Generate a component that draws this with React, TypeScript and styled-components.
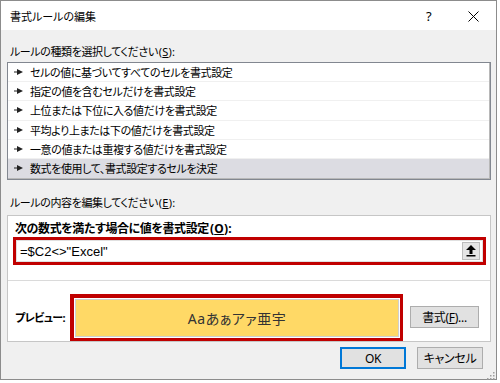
import React from "react";
import styled, { createGlobalStyle } from "styled-components";

const GlobalStyle = createGlobalStyle`
  html, body {
    margin: 0;
    padding: 0;
    background: #ffffff;
  }
  * {
    box-sizing: border-box;
  }
`;

const uiFont = `"Noto Sans", "Noto Sans CJK JP", sans-serif`;

// Window: the whole dialog frame
const Window = styled.div`
  width: 497px;
  height: 380px;
  border: 1px solid #8c8c8c;
  background: #f0f0f0;
  display: flex;
  flex-direction: column;
  font-family: ${uiFont};
  font-size: 11px;
  letter-spacing: -0.4px;
  font-feature-settings: "palt";
  color: #000;
  position: relative;
`;

const TitleBar = styled.div`
  height: 29px;
  background: #ffffff;
  display: flex;
  align-items: center;
  padding: 1px 0 0 9px;
`;

const TitleText = styled.div`
  flex: 1;
  letter-spacing: 0;
`;

const TitleButton = styled.div`
  width: 45px;
  height: 29px;
  display: flex;
  align-items: center;
  justify-content: center;
  font-size: 13px;
`;

const Body = styled.div`
  flex: 1;
  display: flex;
  flex-direction: column;
  padding: 0 6px 0 6px;
`;

const SectionLabel = styled.div<{ $top: number }>`
  margin-top: ${(p) => p.$top}px;
  padding-left: 3px;
  height: 16px;
  line-height: 16px;
`;

// Accel: the "(S):" tail of a label, in plain Latin spacing
const Accel = styled.span`
  letter-spacing: 0.2px;
  padding-left: 1px;
`;

const ListBox = styled.div`
  margin-top: 2px;
  width: 484px;
  height: 118px;
  border: 1px solid #828790;
  box-shadow: inset -1px -1px 0 #b8b8b8;
  background: #ffffff;
  display: flex;
  flex-direction: column;
  padding: 0 1px 1px 0;
`;

const ListRow = styled.div<{ $selected?: boolean }>`
  flex: 1;
  display: flex;
  align-items: center;
  padding-left: 6px;
  gap: 7px;
  background: ${(p) => (p.$selected ? "#dcdce2" : "#ffffff")};
  border-bottom: 1px solid ${(p) => (p.$selected ? "#dcdce2" : "#f0f0f0")};
`;

const Panel = styled.div`
  margin-top: 4px;
  width: 484px;
  height: 127px;
  border: 1px solid #c6c6c6;
  background: #ffffff;
  display: flex;
  flex-direction: column;
`;

const BoldLabel = styled.div`
  font-weight: bold;
  font-size: 12px;
  padding: 5px 0 0 7px;
  height: 21px;
  line-height: 16px;
`;

const RedFrame = styled.div`
  border: 3px solid #c00000;
`;

const FormulaFrame = styled(RedFrame)`
  margin: 0 4px 0 5px;
  height: 28px;
  display: flex;
`;

const FormulaInput = styled.div`
  flex: 1;
  display: flex;
  align-items: center;
  padding: 0 2px 0 3px;
  border: 1px solid #e0e0e0;
  background: #ffffff;
  font-family: "Liberation Sans", sans-serif;
  font-size: 13px;
  letter-spacing: 0;
  font-feature-settings: normal;
`;

const FormulaText = styled.div`
  flex: 1;
`;

const CollapseButton = styled.div`
  width: 18px;
  height: 18px;
  background: #e5e5e5;
  border: 1px solid #bdbdbd;
  display: flex;
  align-items: center;
  justify-content: center;
`;

const Divider = styled.div`
  margin-top: 15px;
  height: 1px;
  background: #dadada;
`;

const PreviewRow = styled.div`
  flex: 1;
  display: flex;
  align-items: flex-end;
  padding: 0 9px 0 7px;
`;

const PreviewLabel = styled.div`
  font-weight: bold;
  font-size: 11px;
  letter-spacing: -0.6px;
  white-space: nowrap;
  width: 55px;
  height: 47px;
  line-height: 47px;
`;

const PreviewFrame = styled(RedFrame)`
  width: 333px;
  height: 47px;
  padding: 1px;
  background: #ffffff;
  border-width: 4px 3px 3px 4px;
`;

const PreviewSample = styled.div`
  height: 100%;
  border: 1px solid #cfcfcf;
  background: #ffd966;
  display: flex;
  align-items: center;
  justify-content: center;
  font-size: 14px;
  color: #333;
  letter-spacing: 0.5px;
`;

const Button = styled.button<{ $focused?: boolean }>`
  height: 22px;
  padding: 0;
  font-family: ${uiFont};
  font-feature-settings: "palt";
  font-size: 12px;
  letter-spacing: -0.3px;
  color: #000;
  background: #e1e1e1;
  border: 1px solid ${(p) => (p.$focused ? "#0078d7" : "#adadad")};
  box-shadow: ${(p) => (p.$focused ? "inset 0 0 0 1px #0078d7" : "none")};
`;

const FormatButton = styled(Button)`
  width: 69px;
  margin-left: 7px;
  margin-bottom: 13px;
`;

const Footer = styled.div`
  display: flex;
  justify-content: flex-end;
  gap: 11px;
  padding: 5px 7px 0 0;
`;

const DialogButton = styled(Button)`
  width: 66px;
`;

const Grip = styled.div`
  position: absolute;
  right: 1px;
  bottom: 1px;
  width: 10px;
  height: 10px;
`;

const RuleArrow = () => (
  <svg width="9" height="6" viewBox="0 0 9 6">
    <rect x="0" y="2.5" width="4" height="1" fill="#222" />
    <polygon points="3,0 9,3 3,6" fill="#222" />
  </svg>
);

const rules = [
  "セルの値に基づいてすべてのセルを書式設定",
  "指定の値を含むセルだけを書式設定",
  "上位または下位に入る値だけを書式設定",
  "平均より上または下の値だけを書式設定",
  "一意の値または重複する値だけを書式設定",
  "数式を使用して、書式設定するセルを決定",
];

const App: React.FC = () => {
  return (
    <>
      <GlobalStyle />
      <Window>
        <TitleBar>
          <TitleText>書式ルールの編集</TitleText>
          <TitleButton>?</TitleButton>
          <TitleButton>
            <svg width="11" height="11" viewBox="0 0 11 11">
              <path d="M0.5 0.5 L10.5 10.5 M10.5 0.5 L0.5 10.5" stroke="#000" strokeWidth="1" />
            </svg>
          </TitleButton>
        </TitleBar>
        <Body>
          <SectionLabel $top={14}>
            ルールの種類を選択してください
            <Accel>
              (<u>S</u>):
            </Accel>
          </SectionLabel>
          <ListBox>
            {rules.map((r, i) => (
              <ListRow key={r} $selected={i === rules.length - 1}>
                <RuleArrow />
                {r}
              </ListRow>
            ))}
          </ListBox>
          <SectionLabel $top={15}>
            ルールの内容を編集してください
            <Accel>
              (<u>E</u>):
            </Accel>
          </SectionLabel>
          <Panel>
            <BoldLabel>
              次の数式を満たす場合に値を書式設定
              <Accel>
                (<u>O</u>):
              </Accel>
            </BoldLabel>
            <FormulaFrame>
              <FormulaInput>
                <FormulaText>=$C2&lt;&gt;"Excel"</FormulaText>
                <CollapseButton>
                  <svg width="10" height="12" viewBox="0 0 10 12">
                    <polygon points="5,0 10,5 6.5,5 6.5,9 3.5,9 3.5,5 0,5" fill="#000" />
                    <rect x="0.5" y="10" width="9" height="1.5" fill="#000" />
                  </svg>
                </CollapseButton>
              </FormulaInput>
            </FormulaFrame>
            <Divider />
            <PreviewRow>
              <PreviewLabel>プレビュー:</PreviewLabel>
              <PreviewFrame>
                <PreviewSample>Aaあぁアァ亜宇</PreviewSample>
              </PreviewFrame>
              <FormatButton>
                書式(<u>F</u>)...
              </FormatButton>
            </PreviewRow>
          </Panel>
          <Footer>
            <DialogButton $focused>OK</DialogButton>
            <DialogButton>キャンセル</DialogButton>
          </Footer>
        </Body>
        <Grip>
          <svg width="10" height="10" viewBox="0 0 10 10">
            {[
              [8, 2],
              [8, 5],
              [5, 5],
              [8, 8],
              [5, 8],
              [2, 8],
            ].map(([x, y]) => (
              <rect key={`${x}-${y}`} x={x} y={y} width="1.5" height="1.5" fill="#a0a0a0" />
            ))}
          </svg>
        </Grip>
      </Window>
    </>
  );
};

export default App;
